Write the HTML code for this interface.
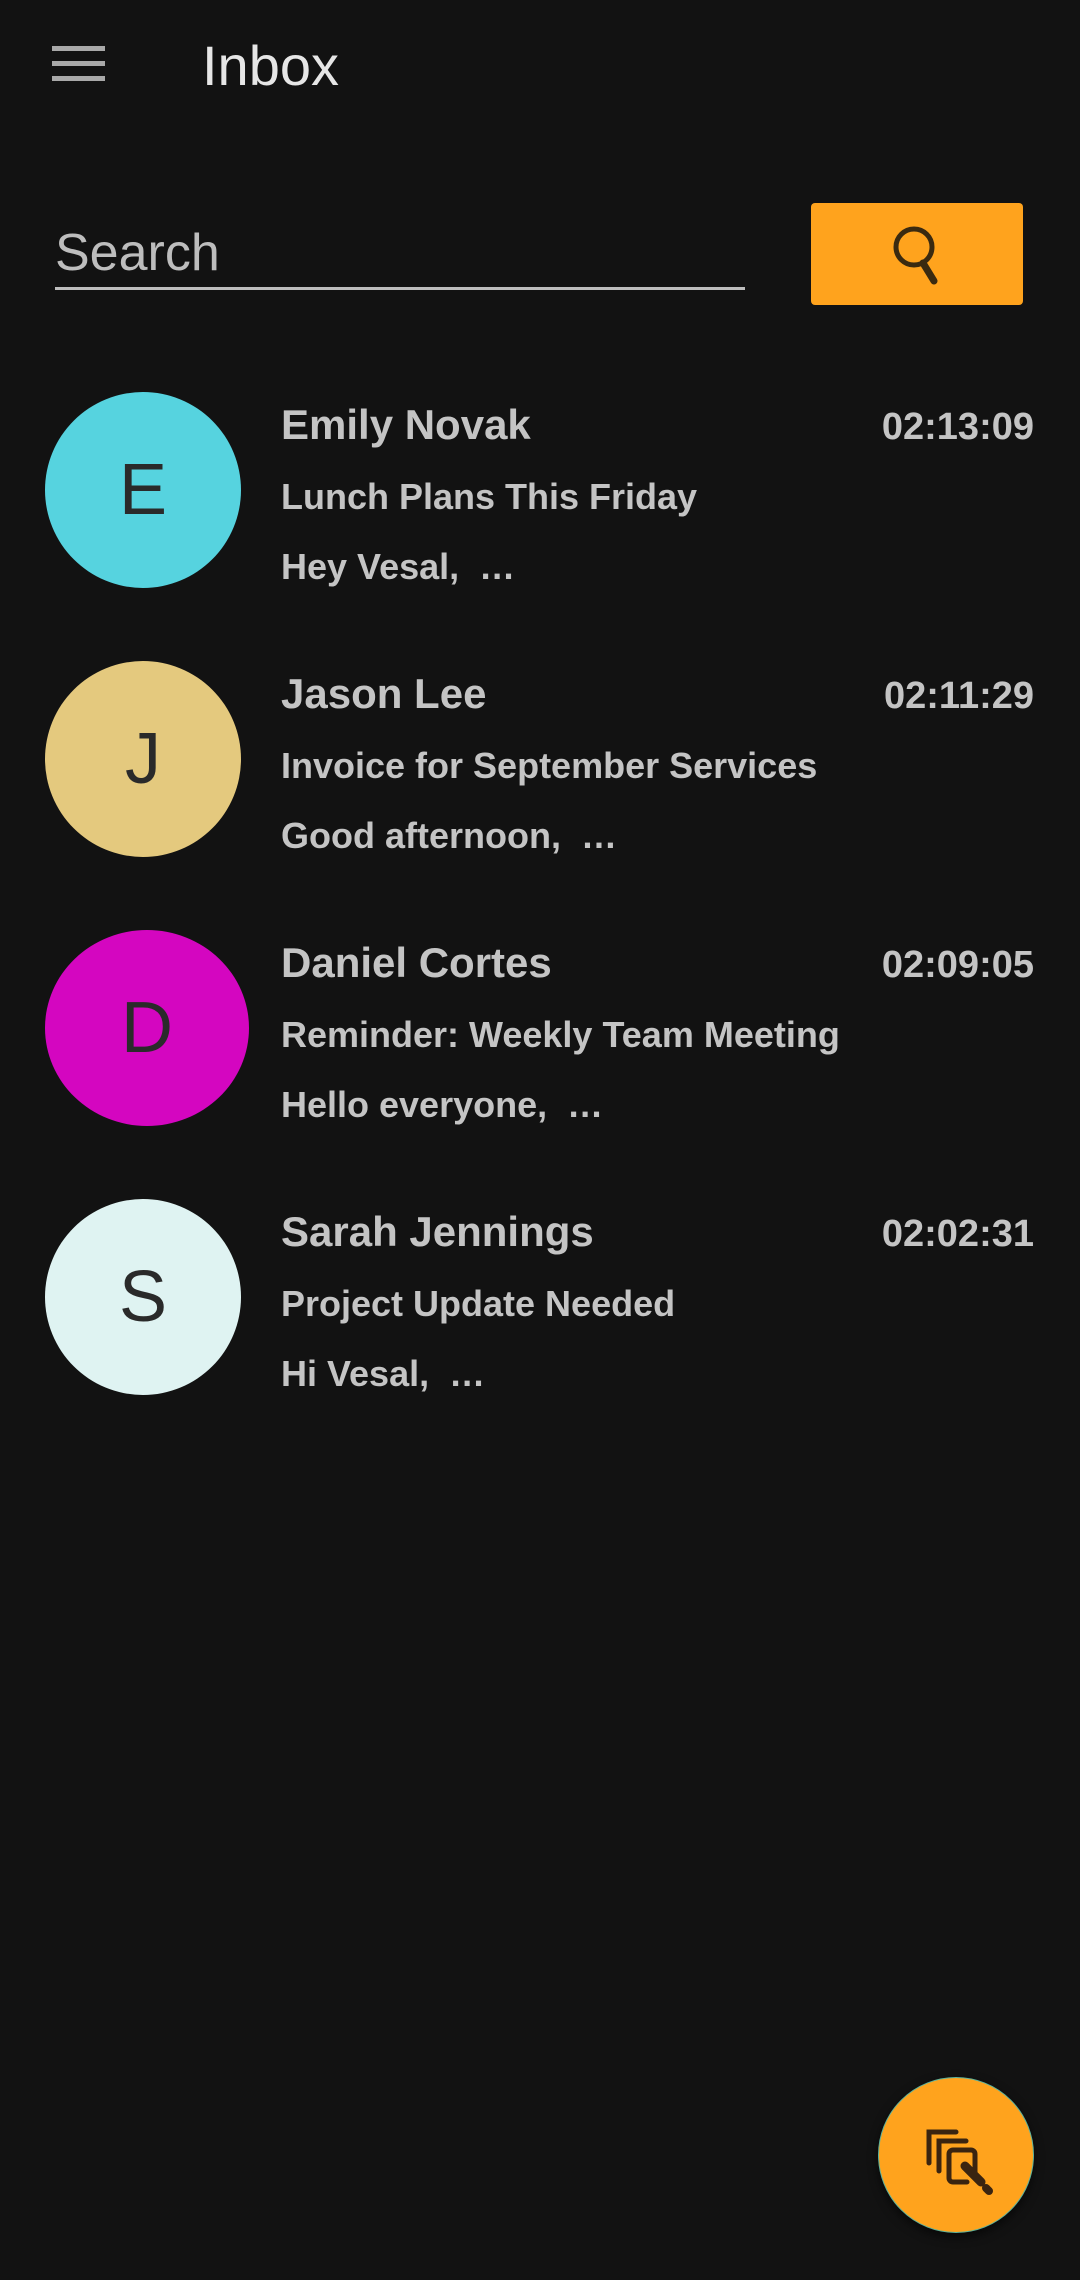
<!DOCTYPE html>
<html><head><meta charset="utf-8"><style>
html,body{margin:0;padding:0;background:#121212;}
body{width:1080px;height:2280px;position:relative;overflow:hidden;font-family:"Liberation Sans",sans-serif;}
.a{position:absolute;white-space:nowrap;}
.bar{position:absolute;left:52px;width:53px;height:5px;background:#a8a8a8;}
.av{position:absolute;left:45px;width:196px;height:196px;border-radius:50%;color:#2a2a2a;font-size:72px;text-align:center;line-height:196px;}
.nm{position:absolute;left:281px;font-size:42px;font-weight:bold;color:#c4c4c4;}
.tm{position:absolute;right:46px;font-size:38px;font-weight:bold;color:#c4c4c4;}
.sb{position:absolute;left:281px;font-size:36px;font-weight:bold;color:#c4c4c4;}
</style></head><body>
<div class="bar" style="top:46px"></div>
<div class="bar" style="top:61px"></div>
<div class="bar" style="top:76px"></div>
<div class="a" style="left:202px;top:31px;font-size:56px;color:#e6e6e6;line-height:70px;">Inbox</div>
<div class="a" style="left:55px;top:221px;font-size:52px;color:#bdbdbd;line-height:64px;">Search</div>
<div class="a" style="left:55px;top:287px;width:690px;height:3px;background:#bdbdbd;"></div>
<div class="a" style="left:811px;top:203px;width:212px;height:102px;background:#ffa31d;border-radius:4px;">
<svg width="212" height="102" viewBox="0 0 212 102"><circle cx="103" cy="44" r="18" fill="none" stroke="#3a2a10" stroke-width="5"/><line x1="112" y1="60" x2="123" y2="78" stroke="#3a2a10" stroke-width="7" stroke-linecap="round"/></svg></div>

<div class="av" style="top:392px;background:#56d3df">E</div>
<div class="nm" style="top:401px">Emily Novak</div><div class="tm" style="top:406px">02:13:09</div>
<div class="sb" style="top:476px">Lunch Plans This Friday</div>
<div class="sb" style="top:546px">Hey Vesal,&nbsp; …</div>

<div class="av" style="top:661px;background:#e4c97e">J</div>
<div class="nm" style="top:670px">Jason Lee</div><div class="tm" style="top:675px">02:11:29</div>
<div class="sb" style="top:745px">Invoice for September Services</div>
<div class="sb" style="top:815px">Good afternoon,&nbsp; …</div>

<div class="av" style="top:930px;background:#d406c0;width:204px">D</div>
<div class="nm" style="top:939px">Daniel Cortes</div><div class="tm" style="top:944px">02:09:05</div>
<div class="sb" style="top:1014px">Reminder: Weekly Team Meeting</div>
<div class="sb" style="top:1084px">Hello everyone,&nbsp; …</div>

<div class="av" style="top:1199px;background:#dff3f2">S</div>
<div class="nm" style="top:1208px">Sarah Jennings</div><div class="tm" style="top:1213px">02:02:31</div>
<div class="sb" style="top:1283px">Project Update Needed</div>
<div class="sb" style="top:1353px">Hi Vesal,&nbsp; …</div>

<div class="a" style="left:878px;top:2077px;width:154px;height:154px;border-radius:50%;background:#ffa31d;border:1px solid #5fb39a;box-shadow:0 4px 10px rgba(0,0,0,.6);">
<svg width="154" height="154" viewBox="0 0 154 154" fill="none" stroke="#3a2410" stroke-width="5" stroke-linecap="round">
<path d="M50 85 V54 H77"/><path d="M60 93 V63 H87"/><path d="M96 96 V76 a4 4 0 0 0 -4 -4 H74 a4 4 0 0 0 -4 4 V100 a4 4 0 0 0 4 4 H88"/>
<path d="M86 88 L102 104" stroke-width="9"/><path d="M107 110 L110 113" stroke-width="8"/>
</svg></div>
</body></html>
